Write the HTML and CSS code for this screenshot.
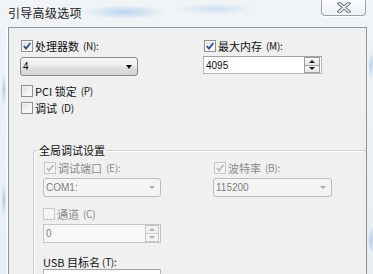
FILE: index.html
```html
<!DOCTYPE html>
<html lang="zh">
<head>
<meta charset="utf-8">
<title>引导高级选项</title>
<link rel="stylesheet" href="styles.css">
</head>
<body>
<div class="screen">
  <div class="titlebar">
    <span class="title">引导高级选项</span>
    <div class="close">
      <svg width="14" height="11" viewBox="0 0 14 11">
        <path d="M2.5 1.5 L11.5 9.5 M11.5 1.5 L2.5 9.5" stroke="#6b7379" stroke-width="3.6" stroke-linecap="square"/>
        <path d="M2.5 1.5 L11.5 9.5 M11.5 1.5 L2.5 9.5" stroke="#f4f6f8" stroke-width="1.6" stroke-linecap="square"/>
      </svg>
    </div>
  </div>
  <div class="frame">
    <div class="client">
      <div class="pair top-pair">
        <div class="field">
          <div class="chk"><span class="cb on"><svg width="10" height="10" viewBox="0 0 10 10"><path d="M1.8 5 L4 7.6 L8.4 2" fill="none" stroke="#2f4c8f" stroke-width="1.8"/></svg></span>处理器数<span class="acc">(N):</span></div>
          <div class="combo">
            <span class="val">4</span>
            <span class="arrow"></span>
          </div>
        </div>
        <div class="field">
          <div class="chk"><span class="cb on"><svg width="10" height="10" viewBox="0 0 10 10"><path d="M1.8 5 L4 7.6 L8.4 2" fill="none" stroke="#2f4c8f" stroke-width="1.8"/></svg></span>最大内存<span class="acc">(M):</span></div>
          <div class="spin">
            <span class="val">4095</span>
            <div class="btns"><span class="sb up"><i></i></span><span class="sb dn"><i></i></span></div>
          </div>
        </div>
      </div>
      <div class="chk solo first"><span class="cb"></span>PCI 锁定<span class="acc">(P)</span></div>
      <div class="chk solo"><span class="cb"></span>调试<span class="acc">(D)</span></div>

      <fieldset class="group">
        <legend>全局调试设置</legend>
        <div class="pair">
          <div class="field">
            <div class="chk dis"><span class="cb on"><svg width="10" height="10" viewBox="0 0 10 10"><path d="M1.8 5 L4 7.6 L8.4 2" fill="none" stroke="#b9bcc0" stroke-width="1.8"/></svg></span>调试端口<span class="acc">(E):</span></div>
            <div class="combo disabled">
              <span class="val">COM1:</span>
              <span class="arrow"></span>
            </div>
          </div>
          <div class="field">
            <div class="chk dis"><span class="cb on"><svg width="10" height="10" viewBox="0 0 10 10"><path d="M1.8 5 L4 7.6 L8.4 2" fill="none" stroke="#b9bcc0" stroke-width="1.8"/></svg></span>波特率<span class="acc">(B):</span></div>
            <div class="combo disabled">
              <span class="val">115200</span>
              <span class="arrow"></span>
            </div>
          </div>
        </div>
        <div class="field channel">
          <div class="chk dis"><span class="cb"></span>通道<span class="acc">(C)</span></div>
          <div class="spin disabled">
            <span class="val">0</span>
            <div class="btns"><span class="sb up"><i></i></span><span class="sb dn"><i></i></span></div>
          </div>
        </div>
        <div class="field usb">
          <div class="lbl">USB 目标名<span class="acc">(T):</span></div>
          <div class="textbox"></div>
        </div>
      </fieldset>
    </div>
  </div>
</div>
</body>
</html>
```
FILE: styles.css
```css
* { box-sizing: border-box; }

html, body {
  margin: 0;
  padding: 0;
}

body {
  width: 373px;
  height: 274px;
  overflow: hidden;
  font-family: "Noto Sans CJK SC", "Noto Sans", sans-serif;
  font-size: 11px;
  color: #111;
}

.screen {
  width: 373px;
  height: 274px;
  overflow: hidden;
  background:
    radial-gradient(ellipse 42px 7px at 125px 12px, rgba(140, 185, 230, 0.55), rgba(140,185,230,0) 100%),
    radial-gradient(ellipse 40px 6px at 215px 9px, rgba(160, 200, 240, 0.45), rgba(160,200,240,0) 100%),
    radial-gradient(ellipse 3px 16px at 4px 90px, rgba(120, 170, 220, 0.5), rgba(120,170,220,0) 100%),
    radial-gradient(ellipse 3px 16px at 4px 200px, rgba(120, 170, 220, 0.5), rgba(120,170,220,0) 100%),
    radial-gradient(ellipse 3px 14px at 371px 65px, rgba(120, 170, 220, 0.5), rgba(120,170,220,0) 100%),
    radial-gradient(ellipse 3px 14px at 371px 240px, rgba(120, 170, 220, 0.5), rgba(120,170,220,0) 100%),
    linear-gradient(180deg, #f1f4f7 0%, #e9eef3 100%);
  display: flex;
  flex-direction: column;
}

.titlebar {
  height: 27px;
  flex: none;
  display: flex;
  align-items: flex-start;
  justify-content: space-between;
  padding: 0 7px 0 8px;
}

.title {
  font-size: 12px;
  line-height: 14px;
  margin-top: 6px;
  color: #1a1a1a;
  letter-spacing: 0.3px;
}

.close {
  width: 45px;
  height: 17px;
  margin-top: -1px;
  border: 1px solid #9ba3ab;
  border-top: none;
  border-radius: 0 0 4px 4px;
  background: linear-gradient(180deg, #fbfcfd 0%, #eef1f4 100%);
  box-shadow: 0 1px 0 rgba(255,255,255,0.8);
  display: flex;
  align-items: center;
  justify-content: center;
}

.close svg { display: block; margin-top: 1px; }

.frame {
  flex: 1;
  min-height: 0;
  overflow: hidden;
  margin-left: 8px;
  width: 359px;
  border: 1px solid #8f959c;
  border-bottom: none;
  background: #f0f0f0;
  box-shadow: -2px 0 0 rgba(255,255,255,0.6);
}

.client {
  padding: 11px 0 0 11px;
}

.pair {
  display: flex;
}

.top-pair { gap: 65px; }

.field {
  display: flex;
  flex-direction: column;
  width: 118px;
}

.top-pair .field + .field { width: 119px; }

.chk, .lbl {
  display: flex;
  align-items: center;
  height: 14px;
  line-height: 14px;
  white-space: nowrap;
  gap: 2px;
}

.cb {
  width: 12px;
  height: 12px;
  margin-left: 1px;
  flex: none;
  border: 1px solid #8e8f8f;
  background: linear-gradient(135deg, #d9dde2 0%, #f4f5f6 60%, #ffffff 100%);
  box-shadow: inset 0 0 0 1px #f6f6f6;
  display: flex;
  align-items: center;
  justify-content: center;
}

.cb svg { display: block; }

.acc {
  font-size: 10px;
  margin-left: 2px;
  letter-spacing: -0.3px;
}

.solo.first { margin-top: 8px; }
.solo + .solo { margin-top: 3px; }

.chk.dis { color: #8c8c8c; }
.chk.dis .cb {
  border-color: #c5c7c9;
  background: #f4f4f4;
  box-shadow: none;
}

.combo {
  margin-top: 4px;
  height: 19px;
  border: 1px solid #8a8a8a;
  border-radius: 3px;
  background: linear-gradient(180deg, #f6f6f6 0%, #ededed 45%, #e0e0e0 55%, #d3d3d3 100%);
  display: flex;
  align-items: center;
  justify-content: space-between;
  padding: 0 4px 0 2px;
  font-family: "Liberation Sans", Arial, sans-serif;
  font-size: 10px;
  color: #000;
}

.arrow {
  width: 0;
  height: 0;
  border-left: 3.5px solid transparent;
  border-right: 3.5px solid transparent;
  border-top: 4px solid #111;
  margin-right: 1px;
}

.combo.disabled {
  margin-top: 3px;
  border-color: #b9bdc1;
  background: #f4f4f4;
  color: #7d7d7d;
}

.combo.disabled .arrow {
  border-top-color: #a8a8a8;
  border-left-width: 3px;
  border-right-width: 3px;
  border-top-width: 3px;
}

.spin {
  margin-top: 3px;
  height: 18px;
  border: 1px solid #b5b9be;
  border-top-color: #9ea3a9;
  background: #fff;
  display: flex;
  align-items: center;
  justify-content: space-between;
  padding-left: 2px;
  font-family: "Liberation Sans", Arial, sans-serif;
  font-size: 10px;
}

.btns {
  display: flex;
  flex-direction: column;
  width: 16px;
  height: 16px;
  margin-right: 1px;
}

.sb {
  flex: 1;
  border: 1px solid #9d9d9d;
  background: linear-gradient(180deg, #f7f7f7 0%, #e4e4e4 100%);
  display: flex;
  align-items: center;
  justify-content: center;
}

.sb + .sb { border-top: none; }

.sb i {
  width: 0;
  height: 0;
  border-left: 3px solid transparent;
  border-right: 3px solid transparent;
}

.up i { border-bottom: 3px solid #1c1c1c; }
.dn i { border-top: 3px solid #1c1c1c; }

.spin.disabled {
  height: 19px;
  border-color: #c2c6ca;
  background: #f8f8f8;
  color: #7d7d7d;
}

.spin.disabled .btns { height: 17px; width: 14px; }
.spin.disabled .sb {
  border-color: #c6c6c6;
  background: #f3f3f3;
}
.spin.disabled .up i { border-bottom-color: #b0b0b0; }
.spin.disabled .dn i { border-top-color: #b0b0b0; }

.group {
  margin: 28px 0 0 13px;
  width: 334px;
  min-width: 0;
  padding: 4px 0 0 9px;
  border: 1px solid #c8d2d9;
  border-bottom: none;
  border-radius: 3px 3px 0 0;
  box-shadow: inset 1px 1px 0 #fff, 1px 0 0 #fff;
}

.group legend {
  margin-left: -5px;
  padding: 0 1px;
  line-height: 14px;
  height: 14px;
  font-size: 11px;
  color: #111;
}

.group .pair { gap: 52px; }

.group .pair .field + .field { width: 119px; }

.channel { margin-top: 10px; }
.channel .chk .cb { margin-left: 0; }

.usb { margin-top: 12px; }
.usb .lbl { gap: 0; }

.textbox {
  height: 20px;
  border: 1px solid #b5b9be;
  border-top-color: #9ea3a9;
  background: #fff;
}
```
